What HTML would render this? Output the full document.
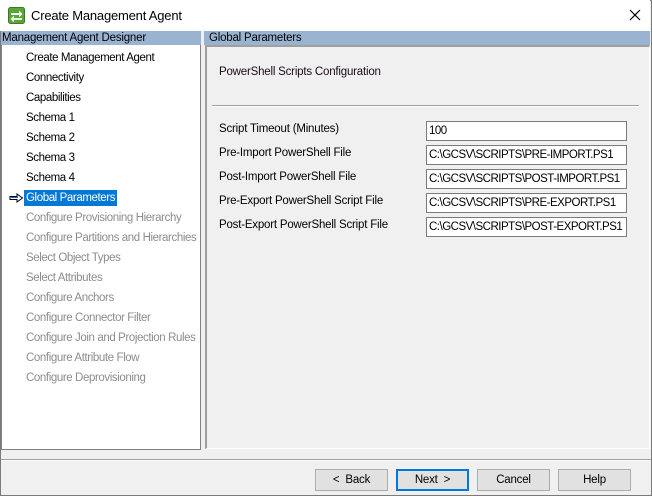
<!DOCTYPE html>
<html><head><style>
*{margin:0;padding:0;box-sizing:border-box}
body{width:652px;height:496px;background:#f0f0f0;font-family:"Liberation Sans",sans-serif;font-size:11.5px;letter-spacing:-0.2px;color:#000;position:relative;overflow:hidden}
div{white-space:nowrap}
.win{position:absolute;left:0;top:0;width:652px;height:496px;border:1px solid #7a7a7a}
.title{position:absolute;left:0;top:0;width:650px;height:31px;background:#fff}
.title span{position:absolute;left:31px;top:8px;font-size:13px;letter-spacing:-0.2px}
.hdr{position:absolute;top:31px;height:14px;background:#99b4d1;line-height:14px;padding-left:1px;color:#000}
.list{position:absolute;left:1px;top:45px;width:200px;height:405px;background:#fff;border:1px solid #828282;border-top:none}
.item{position:absolute;left:22px;height:16px;line-height:16px;padding:0 2px;letter-spacing:-0.4px}
.dis{color:#8d8d8d}
.sel{background:#0078d7;color:#fff}
.panel{position:absolute;left:205px;top:45px;width:445px;height:404px;border-left:2px solid #a0a0a0;border-top:2px solid #a0a0a0;border-right:1px solid #fff;border-bottom:1px solid #fff}
.lbl{position:absolute;left:219px}
.tb{position:absolute;left:426px;width:201px;height:20px;border:1px solid #7a7a7a;background:#fff;padding:2px 2px;line-height:15px;overflow:hidden;letter-spacing:-0.5px}
.btn{position:absolute;top:469px;width:73px;height:22px;background:#e1e1e1;border:1px solid #adadad;text-align:center;line-height:20px}
</style></head><body>
<div class="win"></div>
<div class="title">
<svg style="position:absolute;left:8px;top:7px" width="17" height="17" viewBox="0 0 17 17"><rect x="0.5" y="0.5" width="16" height="16" rx="2" fill="#5aa53a" stroke="#3a7a22"/><path d="M3 6h8V3.5L14.5 7 11 10.5V8H3z" fill="#fff"/><path d="M14 11H6V8.5L2.5 12 6 15.5V13h8z" fill="#e8f5d8"/></svg>
<span>Create Management Agent</span>
<svg style="position:absolute;left:629px;top:9px" width="12" height="12" viewBox="0 0 12 12"><path d="M1 1L11 11M11 1L1 11" stroke="#000" stroke-width="1.2"/></svg>
</div>
<div class="hdr" style="left:1px;width:200px">Management Agent Designer</div>
<div class="hdr" style="left:204px;width:446px;padding-left:5px">Global Parameters</div>
<div class="list">
<div class="item" style="top:5px">Create Management Agent</div>
<div class="item" style="top:25px">Connectivity</div>
<div class="item" style="top:45px">Capabilities</div>
<div class="item" style="top:65px">Schema 1</div>
<div class="item" style="top:85px">Schema 2</div>
<div class="item" style="top:105px">Schema 3</div>
<div class="item" style="top:125px">Schema 4</div>
<svg style="position:absolute;left:7px;top:148px" width="15" height="10" viewBox="0 0 15 10"><path d="M1 3.5h7V1l5.5 4L8 9V6.5H1z" fill="#fff" stroke="#000" stroke-width="1"/><path d="M2 4.5h7" stroke="#0078d7"/></svg>
<div class="item sel" style="top:145px">Global Parameters</div>
<div class="item dis" style="top:165px">Configure Provisioning Hierarchy</div>
<div class="item dis" style="top:185px">Configure Partitions and Hierarchies</div>
<div class="item dis" style="top:205px">Select Object Types</div>
<div class="item dis" style="top:225px">Select Attributes</div>
<div class="item dis" style="top:245px">Configure Anchors</div>
<div class="item dis" style="top:265px">Configure Connector Filter</div>
<div class="item dis" style="top:285px">Configure Join and Projection Rules</div>
<div class="item dis" style="top:305px">Configure Attribute Flow</div>
<div class="item dis" style="top:325px">Configure Deprovisioning</div>
</div>
<div class="panel"></div>
<div style="position:absolute;left:219px;top:66px;color:#1a0a1a">PowerShell Scripts Configuration</div>
<div style="position:absolute;left:212px;top:105px;width:427px;height:2px;border-top:1px solid #a0a0a0;border-bottom:1px solid #fff"></div>
<div class="lbl" style="top:123px">Script Timeout (Minutes)</div>
<div class="lbl" style="top:147px">Pre-Import PowerShell File</div>
<div class="lbl" style="top:171px">Post-Import PowerShell File</div>
<div class="lbl" style="top:195px">Pre-Export PowerShell Script File</div>
<div class="lbl" style="top:219px">Post-Export PowerShell Script File</div>
<div class="tb" style="top:121px">100</div>
<div class="tb" style="top:145px">C:\GCSV\SCRIPTS\PRE-IMPORT.PS1</div>
<div class="tb" style="top:169px">C:\GCSV\SCRIPTS\POST-IMPORT.PS1</div>
<div class="tb" style="top:193px">C:\GCSV\SCRIPTS\PRE-EXPORT.PS1</div>
<div class="tb" style="top:217px">C:\GCSV\SCRIPTS\POST-EXPORT.PS1</div>
<div style="position:absolute;left:1px;top:459px;width:650px;height:2px;border-top:1px solid #a0a0a0;border-bottom:1px solid #fff"></div>
<div class="btn" style="left:315px">&lt;&nbsp; Back</div>
<div class="btn" style="left:396px;border:2px solid #0078d7;line-height:18px">Next &nbsp;&gt;</div>
<div class="btn" style="left:477px">Cancel</div>
<div class="btn" style="left:558px">Help</div>
</body></html>
